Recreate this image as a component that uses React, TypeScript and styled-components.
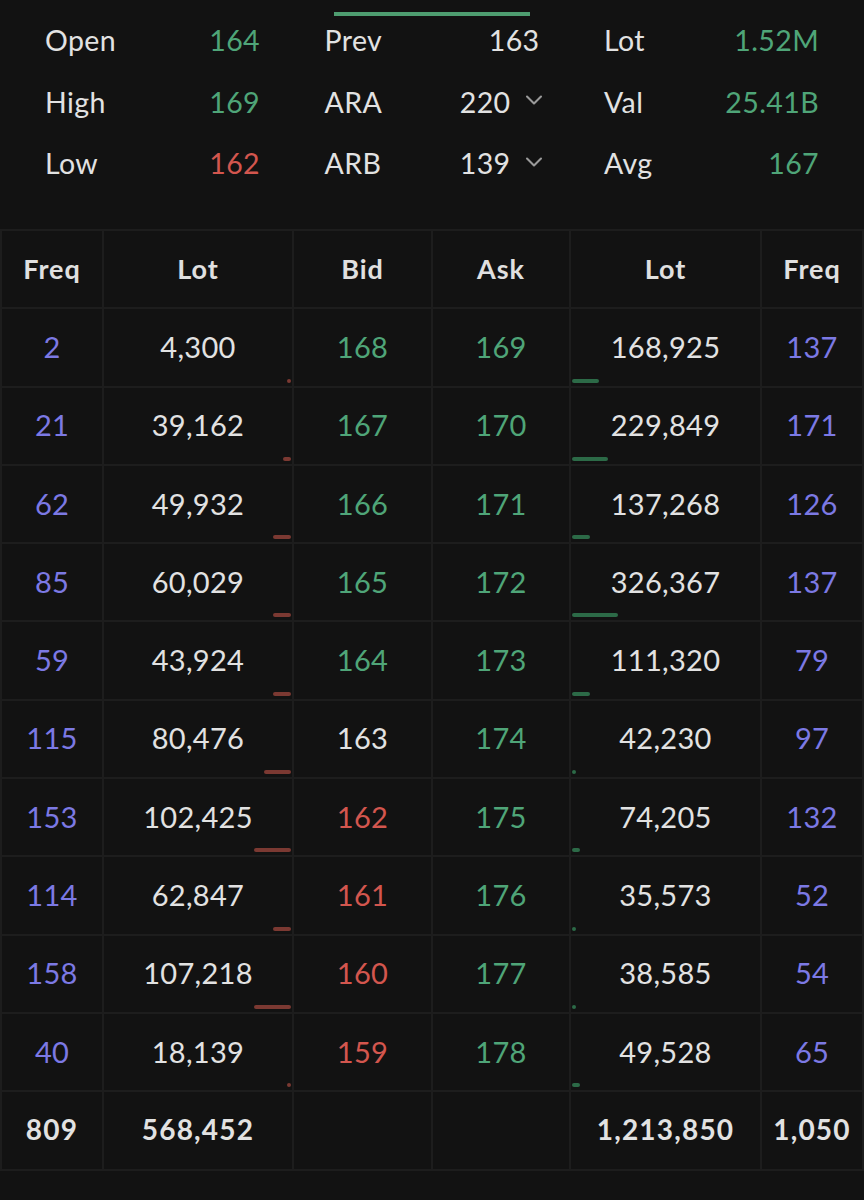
import React from "react";
import styled, { createGlobalStyle } from "styled-components";
import { ChevronDown } from "lucide-react";

const GlobalStyle = createGlobalStyle`
  html, body { margin: 0; padding: 0; background: #121212; }
  body { font-family: Lato, "Open Sans", sans-serif; color: #e6e6e6; }
`;

const GREEN = "#4fa578";
const RED = "#d3564e";
const PURPLE = "#7c79e4";
const WHITE = "#e2e2e2";

const Page = styled.div`
  width: 864px;
  height: 1200px;
  background: #121212;
  display: flex;
  flex-direction: column;
  overflow: hidden;
`;

const TopIndicator = styled.div`
  display: flex;
  justify-content: center;
  padding-top: 12px;
  height: 16px;
  box-sizing: border-box;
`;

const IndicatorBar = styled.div`
  width: 196px;
  height: 4px;
  background: #4e9d70;
`;

const Stats = styled.div`
  display: grid;
  grid-template-columns: repeat(3, 215px);
  column-gap: 64.5px;
  grid-auto-rows: 61.5px;
  padding: 0 0 0 45px;
  height: 214px;
  align-content: start;
  margin-top: -1px;
`;

const StatCell = styled.div`
  display: flex;
  align-items: center;
  justify-content: space-between;
  font-size: 28.5px;
  letter-spacing: 0.4px;
  height: 50px;
`;

const StatLabel = styled.span`
  color: ${WHITE};
`;

const StatValue = styled.span<{ $color: string }>`
  color: ${(p) => p.$color};
  display: flex;
  align-items: center;
  gap: 9px;
`;

const Chevron = styled.span`
  display: inline-flex;
  color: #9a9a9a;
  margin-top: -3px;
  margin-right: -8px;
`;

const Table = styled.div`
  display: grid;
  grid-template-columns: 100px 188px 137px 136px 189px 100px;
  grid-auto-rows: 76.3px;
  gap: 2px;
  padding: 2px;
  background: #1d1d1d;
  width: 864px;
  box-sizing: border-box;
`;

const Cell = styled.div<{ $color?: string; $bold?: boolean }>`
  position: relative;
  background: #121212;
  display: flex;
  align-items: center;
  justify-content: center;
  font-size: ${(p) => (p.$bold ? "28px" : "29px")};
  font-weight: ${(p) => (p.$bold ? 700 : 400)};
  letter-spacing: ${(p) => (p.$bold ? "1.2px" : "0.3px")};
  color: ${(p) => p.$color || WHITE};
  padding-bottom: 2px;
  box-sizing: border-box;
`;

const HeadCell = styled(Cell)`
  font-weight: 700;
  font-size: 27px;
  letter-spacing: 1px;
  color: #e0e0e0;
`;

const Bar = styled.div<{ $side: "bid" | "ask" }>`
  position: absolute;
  bottom: 3px;
  height: 4px;
  border-radius: 2px;
  background: ${(p) => (p.$side === "bid" ? "#7b3932" : "#2c6a47")};
  ${(p) => (p.$side === "bid" ? "right: 1px;" : "left: 1px;")}
`;

type Row = {
  bf: string;
  bl: string;
  bid: string;
  bidColor: string;
  ask: string;
  al: string;
  af: string;
  bw: number;
  aw: number;
};

const rows: Row[] = [
  { bf: "2", bl: "4,300", bid: "168", bidColor: GREEN, ask: "169", al: "168,925", af: "137", bw: 4, aw: 27 },
  { bf: "21", bl: "39,162", bid: "167", bidColor: GREEN, ask: "170", al: "229,849", af: "171", bw: 8, aw: 36 },
  { bf: "62", bl: "49,932", bid: "166", bidColor: GREEN, ask: "171", al: "137,268", af: "126", bw: 18, aw: 18 },
  { bf: "85", bl: "60,029", bid: "165", bidColor: GREEN, ask: "172", al: "326,367", af: "137", bw: 18, aw: 46 },
  { bf: "59", bl: "43,924", bid: "164", bidColor: GREEN, ask: "173", al: "111,320", af: "79", bw: 18, aw: 18 },
  { bf: "115", bl: "80,476", bid: "163", bidColor: WHITE, ask: "174", al: "42,230", af: "97", bw: 27, aw: 4 },
  { bf: "153", bl: "102,425", bid: "162", bidColor: RED, ask: "175", al: "74,205", af: "132", bw: 37, aw: 8 },
  { bf: "114", bl: "62,847", bid: "161", bidColor: RED, ask: "176", al: "35,573", af: "52", bw: 18, aw: 4 },
  { bf: "158", bl: "107,218", bid: "160", bidColor: RED, ask: "177", al: "38,585", af: "54", bw: 37, aw: 4 },
  { bf: "40", bl: "18,139", bid: "159", bidColor: RED, ask: "178", al: "49,528", af: "65", bw: 4, aw: 8 },
];

const stats: { label: string; value: string; color: string; chevron?: boolean }[] = [
  { label: "Open", value: "164", color: GREEN },
  { label: "Prev", value: "163", color: WHITE },
  { label: "Lot", value: "1.52M", color: GREEN },
  { label: "High", value: "169", color: GREEN },
  { label: "ARA", value: "220", color: WHITE, chevron: true },
  { label: "Val", value: "25.41B", color: GREEN },
  { label: "Low", value: "162", color: RED },
  { label: "ARB", value: "139", color: WHITE, chevron: true },
  { label: "Avg", value: "167", color: GREEN },
];

export default function App() {
  return (
    <Page>
      <GlobalStyle />
      <TopIndicator>
        <IndicatorBar />
      </TopIndicator>
      <Stats>
        {stats.map((s) => (
          <StatCell key={s.label}>
            <StatLabel>{s.label}</StatLabel>
            <StatValue $color={s.color}>
              {s.value}
              {s.chevron && (
                <Chevron>
                  <ChevronDown size={28} strokeWidth={1.8} />
                </Chevron>
              )}
            </StatValue>
          </StatCell>
        ))}
      </Stats>
      <Table>
        <HeadCell>Freq</HeadCell>
        <HeadCell>Lot</HeadCell>
        <HeadCell>Bid</HeadCell>
        <HeadCell>Ask</HeadCell>
        <HeadCell>Lot</HeadCell>
        <HeadCell>Freq</HeadCell>
        {rows.map((r) => (
          <React.Fragment key={r.bid}>
            <Cell $color={PURPLE}>{r.bf}</Cell>
            <Cell>
              {r.bl}
              <Bar $side="bid" style={{ width: r.bw }} />
            </Cell>
            <Cell $color={r.bidColor}>{r.bid}</Cell>
            <Cell $color={GREEN}>{r.ask}</Cell>
            <Cell>
              {r.al}
              <Bar $side="ask" style={{ width: r.aw }} />
            </Cell>
            <Cell $color={PURPLE}>{r.af}</Cell>
          </React.Fragment>
        ))}
        <Cell $bold>809</Cell>
        <Cell $bold>568,452</Cell>
        <Cell />
        <Cell />
        <Cell $bold>1,213,850</Cell>
        <Cell $bold>1,050</Cell>
      </Table>
    </Page>
  );
}
